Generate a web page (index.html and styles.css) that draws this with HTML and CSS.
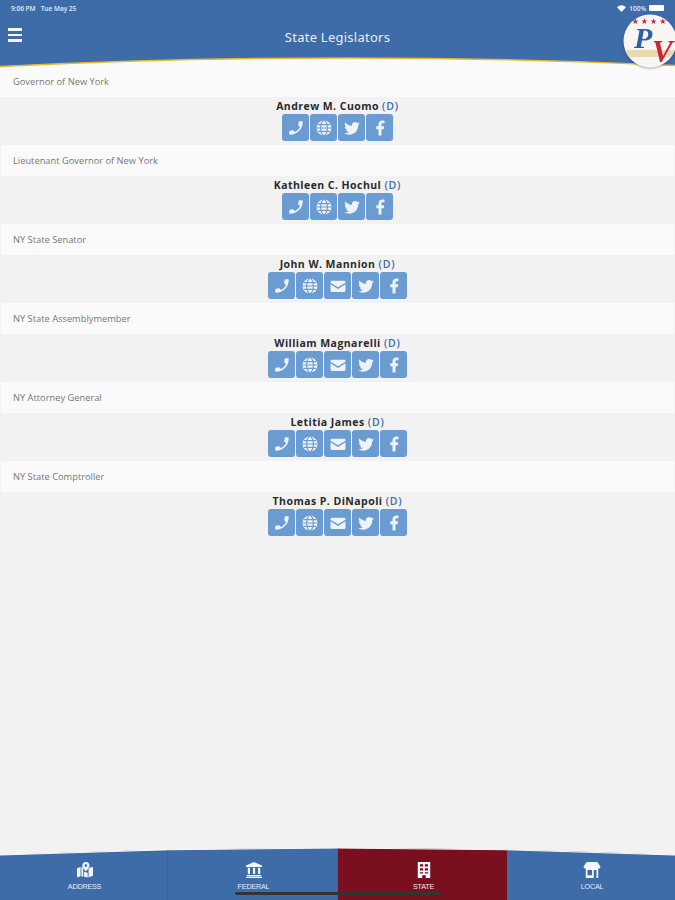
FILE: index.html
```html
<!DOCTYPE html>
<html lang="en">
<head>
  <meta charset="UTF-8" />
  <title>State Legislators</title>
  <link rel="stylesheet" href="styles.css">
</head>
<body>
  <svg class="icon-defs" width="0" height="0">
    <symbol id="i-phone" viewBox="0 0 24 24"><path transform="translate(24 0) scale(-1 1)" d="M6.6 10.8c1.4 2.8 3.8 5.1 6.6 6.6l2.2-2.2c.3-.3.7-.4 1-.2 1.1.4 2.3.6 3.6.6.6 0 1 .4 1 1V20c0 .6-.4 1-1 1C10.6 21 3 13.400 3 4c0-.6.4-1 1-1h3.500c.6 0 1 .4 1 1 0 1.300.2 2.500.6 3.600.1.300 0 .7-.2 1z"/></symbol>
    <symbol id="i-globe" viewBox="0 0 24 24"><circle cx="12" cy="12" r="10"/><g fill="none" stroke="#6a9bd1" stroke-width="1.500"><ellipse cx="12" cy="12" rx="4.500" ry="10"/><path d="M2 12h20M4 7.500h16M4 16.500h16"/></g></symbol>
    <symbol id="i-mail" viewBox="0 0 24 24"><path d="M2 7c0-1.100.9-2 2-2h16c1.100 0 2 .9 2 2v.6l-10 6.200L2 7.600z"/><path d="M2 9.800l10 6.200 10-6.200V18c0 1.100-.9 2-2 2H4c-1.100 0-2-.9-2-2z"/></symbol>
    <symbol id="i-twitter" viewBox="0 0 24 24"><path d="M22.460 6c-.77.35-1.600.58-2.460.69.88-.53 1.560-1.370 1.880-2.380-.83.5-1.750.85-2.720 1.050C18.370 4.500 17.260 4 16 4c-2.350 0-4.270 1.920-4.270 4.290 0 .34.04.67.11.98C8.280 9.090 5.110 7.380 3 4.790c-.37.63-.58 1.370-.58 2.150 0 1.490.75 2.810 1.910 3.560-.71 0-1.370-.2-1.950-.5v.03c0 2.080 1.480 3.820 3.440 4.210a4.220 4.220 0 0 1-1.930.07 4.280 4.280 0 0 0 4 2.980 8.521 8.521 0 0 1-5.330 1.840c-.34 0-.68-.02-1.020-.06C3.440 20.290 5.700 21 8.120 21 16 21 20.330 14.460 20.330 8.790c0-.19 0-.37-.01-.56.84-.6 1.560-1.360 2.140-2.230z"/></symbol>
    <symbol id="i-fb" viewBox="0 0 24 24"><path d="M14 22v-8.500h3l.5-3.700H14V7.500c0-1.100.4-1.800 1.900-1.800H18V2.200C17.600 2.100 16.500 2 15.300 2 12.400 2 10 3.800 10 7v2.800H7v3.700h3V22z"/></symbol>
  </svg>

  <header class="topbar">
    <div class="status">
      <span>9:06 PM &nbsp; Tue May 25</span>
      <span class="status-right">
        <svg class="wifi" viewBox="0 0 12 9"><path d="M6 9L0 2.800C3.500-.9 8.500-.9 12 2.800z"/></svg>
        100%
        <span class="battery"></span>
      </span>
    </div>
    <div class="title-row">
      <div class="menu"><span></span><span></span><span></span></div>
      <h1>State Legislators</h1>
    </div>
  </header>
  <svg class="top-curve" viewBox="0 0 675 14" preserveAspectRatio="none">
    <path d="M0 9.500Q337 -7 675 8.500V0H0z" fill="#3d6ca8"/>
    <path d="M0 9.500Q337 -7 675 8.500" fill="none" stroke="#e8b730" stroke-width="1.500"/>
  </svg>
  <svg class="logo" viewBox="0 0 54 54">
    <circle cx="27" cy="27" r="26.500" fill="#f7f6f3"/>
    <path d="M2.300 36h49.400a26.500 26.500 0 0 1-4 7H5.800a26.500 26.500 0 0 1-3.500-7z" fill="#ecd9b0"/>
    <text x="27" y="10" class="logo-stars">★★★★</text>
    <text x="11" y="34" class="logo-p">P</text>
    <text x="29" y="48" class="logo-v">V</text>
  </svg>

  <main class="list">
    <section class="office">
      <div class="office-label first">Governor of New York</div>
      <div class="person">
        <div class="name">Andrew M. Cuomo <span class="party">(D)</span></div>
        <div class="actions">
          <a class="act"><svg><use href="#i-phone"/></svg></a>
          <a class="act"><svg><use href="#i-globe"/></svg></a>
          <a class="act"><svg><use href="#i-twitter"/></svg></a>
          <a class="act"><svg><use href="#i-fb"/></svg></a>
        </div>
      </div>
    </section>
    <section class="office">
      <div class="office-label">Lieutenant Governor of New York</div>
      <div class="person">
        <div class="name">Kathleen C. Hochul <span class="party">(D)</span></div>
        <div class="actions">
          <a class="act"><svg><use href="#i-phone"/></svg></a>
          <a class="act"><svg><use href="#i-globe"/></svg></a>
          <a class="act"><svg><use href="#i-twitter"/></svg></a>
          <a class="act"><svg><use href="#i-fb"/></svg></a>
        </div>
      </div>
    </section>
    <section class="office">
      <div class="office-label">NY State Senator</div>
      <div class="person">
        <div class="name">John W. Mannion <span class="party">(D)</span></div>
        <div class="actions">
          <a class="act"><svg><use href="#i-phone"/></svg></a>
          <a class="act"><svg><use href="#i-globe"/></svg></a>
          <a class="act"><svg><use href="#i-mail"/></svg></a>
          <a class="act"><svg><use href="#i-twitter"/></svg></a>
          <a class="act"><svg><use href="#i-fb"/></svg></a>
        </div>
      </div>
    </section>
    <section class="office">
      <div class="office-label">NY State Assemblymember</div>
      <div class="person">
        <div class="name">William Magnarelli <span class="party">(D)</span></div>
        <div class="actions">
          <a class="act"><svg><use href="#i-phone"/></svg></a>
          <a class="act"><svg><use href="#i-globe"/></svg></a>
          <a class="act"><svg><use href="#i-mail"/></svg></a>
          <a class="act"><svg><use href="#i-twitter"/></svg></a>
          <a class="act"><svg><use href="#i-fb"/></svg></a>
        </div>
      </div>
    </section>
    <section class="office">
      <div class="office-label">NY Attorney General</div>
      <div class="person">
        <div class="name">Letitia James <span class="party">(D)</span></div>
        <div class="actions">
          <a class="act"><svg><use href="#i-phone"/></svg></a>
          <a class="act"><svg><use href="#i-globe"/></svg></a>
          <a class="act"><svg><use href="#i-mail"/></svg></a>
          <a class="act"><svg><use href="#i-twitter"/></svg></a>
          <a class="act"><svg><use href="#i-fb"/></svg></a>
        </div>
      </div>
    </section>
    <section class="office">
      <div class="office-label">NY State Comptroller</div>
      <div class="person">
        <div class="name">Thomas P. DiNapoli <span class="party">(D)</span></div>
        <div class="actions">
          <a class="act"><svg><use href="#i-phone"/></svg></a>
          <a class="act"><svg><use href="#i-globe"/></svg></a>
          <a class="act"><svg><use href="#i-mail"/></svg></a>
          <a class="act"><svg><use href="#i-twitter"/></svg></a>
          <a class="act"><svg><use href="#i-fb"/></svg></a>
        </div>
      </div>
    </section>
  </main>

  <nav class="tabs">
    <a class="tab">
      <svg viewBox="0 0 20 18"><path d="M1 7l4-1.500V16l-4 1.500zM6 5.500l2 .8V16.500L6 16zM14 7l1-.4 4-1.100V15.500L14 17.500zM9 11l4 1v5.500l-4-1z"/><path fill-rule="evenodd" d="M11 0a4 4 0 0 1 4 4c0 2.500-4 6.500-4 6.500S7 6.500 7 4a4 4 0 0 1 4-4zm0 2.500a1.500 1.500 0 1 0 0 3 1.500 1.500 0 0 0 0-3z"/></svg>
      <span>ADDRESS</span>
    </a>
    <a class="tab">
      <svg viewBox="0 0 20 18"><path d="M10 0l9 4v1.500H1V4zM3 6.500h2.500v7H3zM8.800 6.500h2.500v7H8.800zM14.500 6.500H17v7h-2.500zM2 14.500h16V16H2zM1 16.500h18V18H1z"/></svg>
      <span>FEDERAL</span>
    </a>
    <a class="tab active">
      <svg viewBox="0 0 20 18"><path fill-rule="evenodd" d="M3 0h14v18h-5v-3H8v3H3zm2.500 2.500v2.500H9V2.500zm5.500 0v2.500h3.500V2.500zM5.500 7v2.500H9V7zM11 7v2.500h3.500V7zM5.500 11.500V13H9v-1.500zm5.500 0V13h3.500v-1.500z"/></svg>
      <span>STATE</span>
    </a>
    <a class="tab">
      <svg viewBox="0 0 20 18"><path fill-rule="evenodd" d="M4 0h12l3.500 5c0 1.500-1 2.500-2.500 2.500v10.500H3V7.500C1.500 7.500.5 6.500.5 5zM5 9v6h5V9zm7 0v9h3V9z"/></svg>
      <span>LOCAL</span>
    </a>
    <svg class="bottom-curve" viewBox="0 0 675 9" preserveAspectRatio="none">
      <path d="M0 7Q337 -7 675 7V0H0z" fill="#f2f2f2"/>
      <path d="M0 7Q337 -7 675 7" fill="none" stroke="#fafafa" stroke-width="1"/>
    </svg>
    <div class="home-bar"></div>
  </nav>
</body>
</html>
```

FILE: styles.css
```css
html, body {
  margin: 0;
  padding: 0;
}

body {
  position: relative;
  display: flex;
  flex-direction: column;
  height: 900px;
  overflow: hidden;
  background-color: #f2f2f2;
  font-family: "Open Sans", sans-serif;
}

.icon-defs {
  position: absolute;
}

/* header */
.topbar {
  height: 58px;
  background-color: #3d6ca8;
  color: #fff;
  flex-shrink: 0;
}

.status {
  display: flex;
  justify-content: space-between;
  align-items: center;
  height: 14px;
  padding: 1px 11px 0 11px;
  font-size: 6.5px;
  font-weight: 600;
  color: #e6edf6;
}

.status-right {
  display: flex;
  align-items: center;
  gap: 3px;
}

.wifi {
  width: 9px;
  height: 7px;
  fill: #fff;
}

.battery {
  width: 15px;
  height: 6px;
  border-radius: 1px;
  background-color: #fff;
}

.title-row {
  position: relative;
  display: flex;
  justify-content: center;
  padding-top: 8px;
}

h1 {
  margin: 0;
  font-size: 13px;
  line-height: 28px;
  font-weight: 400;
  font-family: "Noto Sans", sans-serif;
  letter-spacing: 0.25px;
  color: #e9eff7;
}

.menu {
  position: absolute;
  left: 8px;
  top: 13px;
  display: flex;
  flex-direction: column;
  gap: 3px;
}

.menu span {
  display: block;
  width: 14px;
  height: 2.500px;
  background-color: #f2f5f9;
}

.top-curve {
  position: absolute;
  left: 0;
  top: 57px;
  width: 675px;
  height: 14px;
}

.logo {
  position: absolute;
  left: 623px;
  top: 14px;
  width: 54px;
  height: 54px;
  filter: drop-shadow(0 1px 1px rgba(0, 0, 0, 0.3));
}

.logo-stars {
  font-family: "DejaVu Sans", sans-serif;
  font-size: 8px;
  letter-spacing: 2px;
  text-anchor: middle;
  fill: #c5283d;
}

.logo-p {
  font-family: "Liberation Serif", serif;
  font-style: italic;
  font-weight: 700;
  font-size: 30px;
  fill: #2f5fa5;
}

.logo-v {
  font-family: "Liberation Serif", serif;
  font-style: italic;
  font-weight: 700;
  font-size: 31px;
  fill: #c5283d;
}

/* list */
.list {
  flex: 1;
}

.office-label {
  height: 31px;
  padding-left: 12px;
  margin: 0 1px;
  background-color: #fafafa;
  font-size: 9.300px;
  line-height: 31px;
  color: #777;
}

.office-label.first {
  height: 39px;
  line-height: 47px;
  padding-left: 13px;
  margin: 0;
}

.person {
  height: 48px;
  text-align: center;
}

.name {
  padding-top: 2px;
  font-size: 10.500px;
  line-height: 14px;
  font-weight: 700;
  letter-spacing: 0.45px;
  color: #2a2a2a;
}

.party {
  font-weight: 600;
  letter-spacing: 0.8px;
  color: #3d6ca8;
}

.actions {
  display: flex;
  justify-content: center;
  gap: 1px;
  margin-top: 1px;
}

.act {
  display: flex;
  align-items: center;
  justify-content: center;
  width: 27px;
  height: 27px;
  border-radius: 3px;
  background-color: #6a9bd1;
}

.act svg {
  width: 18px;
  height: 18px;
  fill: #eef3f9;
}

/* bottom tabs */
.tabs {
  position: relative;
  display: grid;
  grid-template-columns: 168px 170px 169px 168px;
  height: 52px;
  flex-shrink: 0;
  background-color: #3d6ca8;
}

.tab {
  display: flex;
  flex-direction: column;
  align-items: center;
  padding: 14px 0 0 2px;
  color: #e6edf6;
  border-right: 1px solid #38649c;
}

.tab:last-of-type {
  border-right: none;
}

.tab svg {
  width: 18px;
  height: 16px;
  fill: #f2f5f9;
}

.tab span {
  margin-top: 4px;
  font-family: "Liberation Sans", sans-serif;
  font-size: 7.200px;
  line-height: 10px;
  letter-spacing: -0.2px;
}

.tab.active {
  background-color: #7a0f1f;
  border-right: none;
}

.bottom-curve {
  position: absolute;
  left: 0;
  top: 0;
  width: 675px;
  height: 9px;
}

.home-bar {
  position: absolute;
  left: 235px;
  top: 44px;
  width: 206px;
  height: 3px;
  border-radius: 2px;
  background-color: #333;
}
```
